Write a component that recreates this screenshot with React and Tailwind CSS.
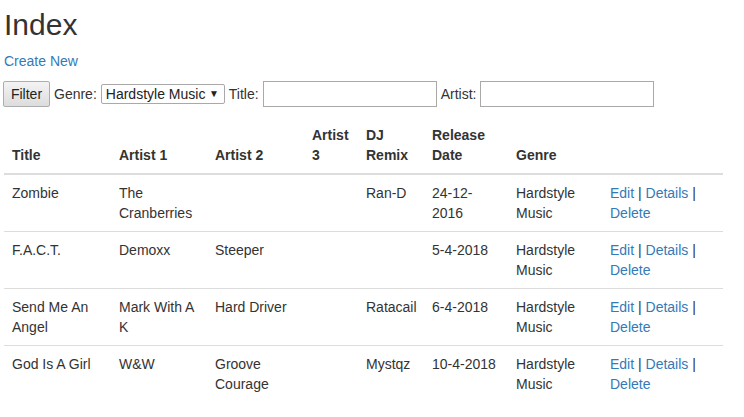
const SONGS = [
  { title: 'Zombie', a1: 'The Cranberries', a2: '', a3: '', dj: 'Ran-D', date: '24-12-2016', genre: 'Hardstyle Music' },
  { title: 'F.A.C.T.', a1: 'Demoxx', a2: 'Steeper', a3: '', dj: '', date: '5-4-2018', genre: 'Hardstyle Music' },
  { title: 'Send Me An Angel', a1: 'Mark With A K', a2: 'Hard Driver', a3: '', dj: 'Ratacail', date: '6-4-2018', genre: 'Hardstyle Music' },
  { title: 'God Is A Girl', a1: 'W&W', a2: 'Groove Courage', a3: '', dj: 'Mystqz', date: '10-4-2018', genre: 'Hardstyle Music' },
]

const HEADERS = ['Title', 'Artist 1', 'Artist 2', 'Artist 3', 'DJ Remix', 'Release Date', 'Genre', '']

function Link({ children }) {
  return <a href="#" className="text-[#337ab7] hover:underline">{children}</a>
}

export default function App() {
  return (
    <div className="min-h-screen bg-white pl-[4px] pt-[8px] font-['Liberation_Sans',Arial,sans-serif] text-[14px] leading-[20px] text-[#333]">
      <h2 className="mb-[10px] text-[30px] leading-[33px] font-normal">Index</h2>
      <p className="mb-[10px]">
        <Link>Create New</Link>
      </p>

      <form className="flex items-center gap-1" onSubmit={(e) => e.preventDefault()}>
        <button
          type="submit"
          className="h-[26px] w-[47px] -ml-px rounded-[2px] border border-[#adadad] bg-gradient-to-b from-[#f4f4f4] to-[#dcdcdc] text-[14px] text-[#222]"
        >
          Filter
        </button>
        <span>Genre:</span>
        <div className="flex h-[20px] w-[124px] items-center justify-between rounded-[2px] border border-[#a9a9a9] bg-white pl-[4px] pr-[5px] text-[14px] leading-[18px] text-[#222]">
          <span>Hardstyle Music</span>
          <span className="text-[10px]">▼</span>
        </div>
        <span>Title:</span>
        <input type="text" className="h-[26px] w-[174px] border border-[#a9a9a9] bg-white px-1 outline-none" />
        <span>Artist:</span>
        <input type="text" className="h-[26px] w-[174px] border border-[#a9a9a9] bg-white px-1 outline-none" />
      </form>

      <table className="mt-[10px] w-[719px] table-fixed border-collapse">
        <colgroup>
          <col className="w-[107px]" />
          <col className="w-[96px]" />
          <col className="w-[97px]" />
          <col className="w-[54px]" />
          <col className="w-[66px]" />
          <col className="w-[84px]" />
          <col className="w-[94px]" />
          <col className="w-[121px]" />
        </colgroup>
        <thead>
          <tr className="border-b-2 border-[#ddd]">
            {HEADERS.map((h, i) => (
              <th key={i} className="p-2 text-left align-bottom font-bold">{h}</th>
            ))}
          </tr>
        </thead>
        <tbody>
          {SONGS.map((s) => (
            <tr key={s.title} className="border-t border-[#ddd]">
              <td className="p-2 align-top">{s.title}</td>
              <td className="p-2 align-top">{s.a1}</td>
              <td className="p-2 align-top">{s.a2}</td>
              <td className="p-2 align-top">{s.a3}</td>
              <td className="p-2 align-top">{s.dj}</td>
              <td className="p-2 align-top">{s.date}</td>
              <td className="p-2 align-top">{s.genre}</td>
              <td className="p-2 align-top">
                <Link>Edit</Link> | <Link>Details</Link> | <Link>Delete</Link>
              </td>
            </tr>
          ))}
        </tbody>
      </table>
    </div>
  )
}
